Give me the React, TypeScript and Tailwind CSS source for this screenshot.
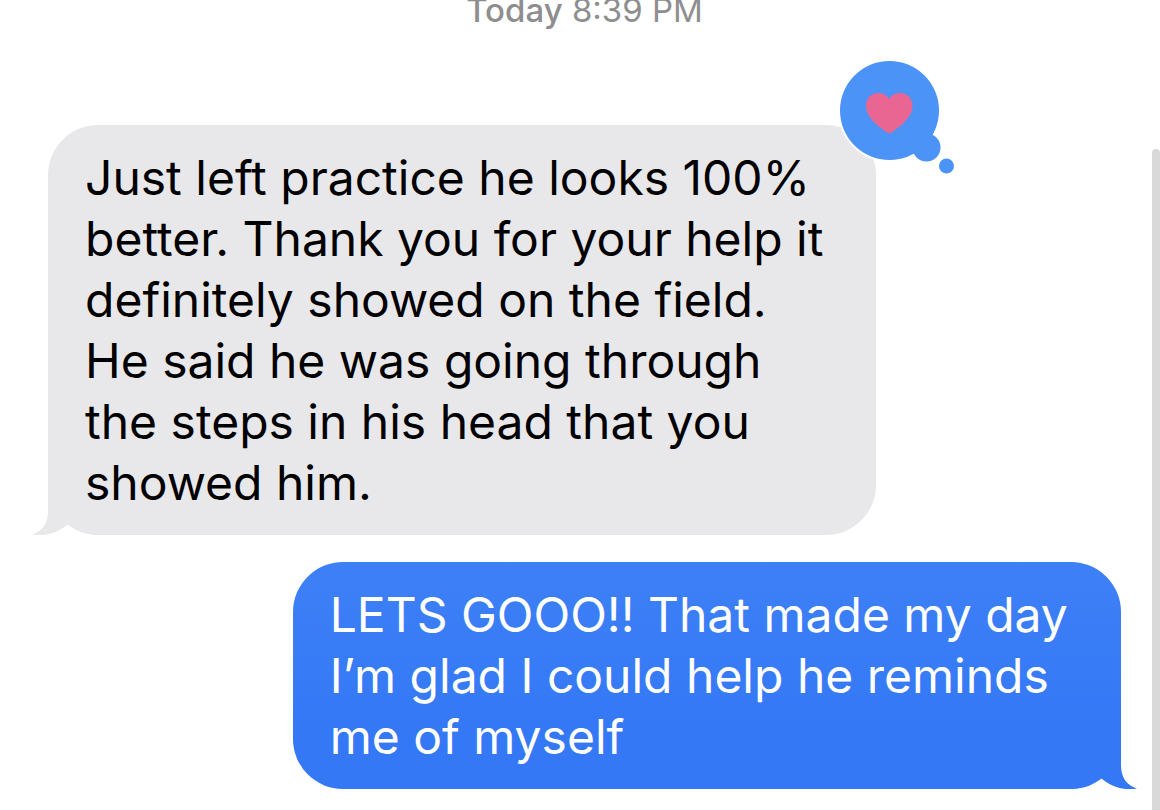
import clsx from "clsx";

type Message = {
  id: number,
  text: string,
  sent: boolean,
  loved?: boolean
};

const messages: Message[] = [
  {
    id: 1,
    text: "Just left practice he looks 100% better. Thank you for your help it definitely showed on the field. He said he was going through the steps in his head that you showed him.",
    sent: false,
    loved: true
  },
  {
    id: 2,
    text: "LETS GOOO!! That made my day I’m glad I could help he reminds me of myself",
    sent: true
  }
];

function Tail({ sent }: { sent: boolean }) {
  return (
    <svg
      viewBox="0 0 68 50"
      aria-hidden="true"
      className={clsx(
        "absolute bottom-0 h-[50px] w-[68px]",
        sent ? "-right-4 -scale-x-100 fill-[#3478f6]" : "-left-4 fill-[#e8e8ea]"
      )}
    >
      <path d="M16 0V26C16 38 11 46 0 49.500C12 52 26 48 36 39C46 46 56 50 68 50V0Z" />
    </svg>
  );
}

function LovedReaction() {
  return (
    <svg
      viewBox="0 0 120 118"
      role="img"
      aria-label="Loved"
      className="absolute -top-[68px] -right-20 h-[118px] w-[120px]"
    >
      <circle cx="53.5" cy="53.5" r="51.5" fill="#fff" />
      <g fill="#4b93f7">
        <circle cx="53.5" cy="53.5" r="49.5" />
        <circle cx="90.5" cy="90.5" r="14" />
        <circle cx="110.5" cy="109" r="7.5" />
      </g>
      <path
        fill="#e96693"
        d="M53.3 42C51 38 47 36 42.500 36C35 36 30 41.500 30 49C30 60 41 68.500 51 75.500Q53.300 77 55.600 75.500C65.500 68.500 76.500 60 76.500 49C76.500 41.500 71.500 36 64 36C59.500 36 55.500 38 53.300 42Z"
      />
    </svg>
  );
}

function Bubble({ message }: { message: Message }) {
  return (
    <li
      className={clsx(
        "relative w-[77.2%] rounded-[50px] pt-[22px] pr-11 pb-[22px] pl-[37px] text-5xl leading-[61px]",
        message.sent
          ? "self-end bg-linear-to-b from-[#3d80f6] to-[#3478f6] to-75% text-white"
          : "self-start bg-[#e8e8ea] text-black"
      )}
    >
      <Tail sent={message.sent} />
      <p className="relative">{message.text}</p>
      {message.loved && <LovedReaction />}
    </li>
  );
}

export default function App() {
  return (
    <main className="relative min-h-screen bg-white pr-[39px] pb-5 pl-12 font-['Inter',sans-serif]">
      <p className="text-center text-[33px] leading-5 text-[#8e8e90]">
        <span className="font-medium">Today</span> <time>8:39 PM</time>
      </p>
      <ul className="mt-[105px] flex flex-col gap-[27px]">
        {messages.map((message) => (
          <Bubble key={message.id} message={message} />
        ))}
      </ul>
      <div className="absolute top-[149px] right-0 bottom-0 w-2 rounded-t-full bg-[#d9d9d9]" />
    </main>
  );
}
